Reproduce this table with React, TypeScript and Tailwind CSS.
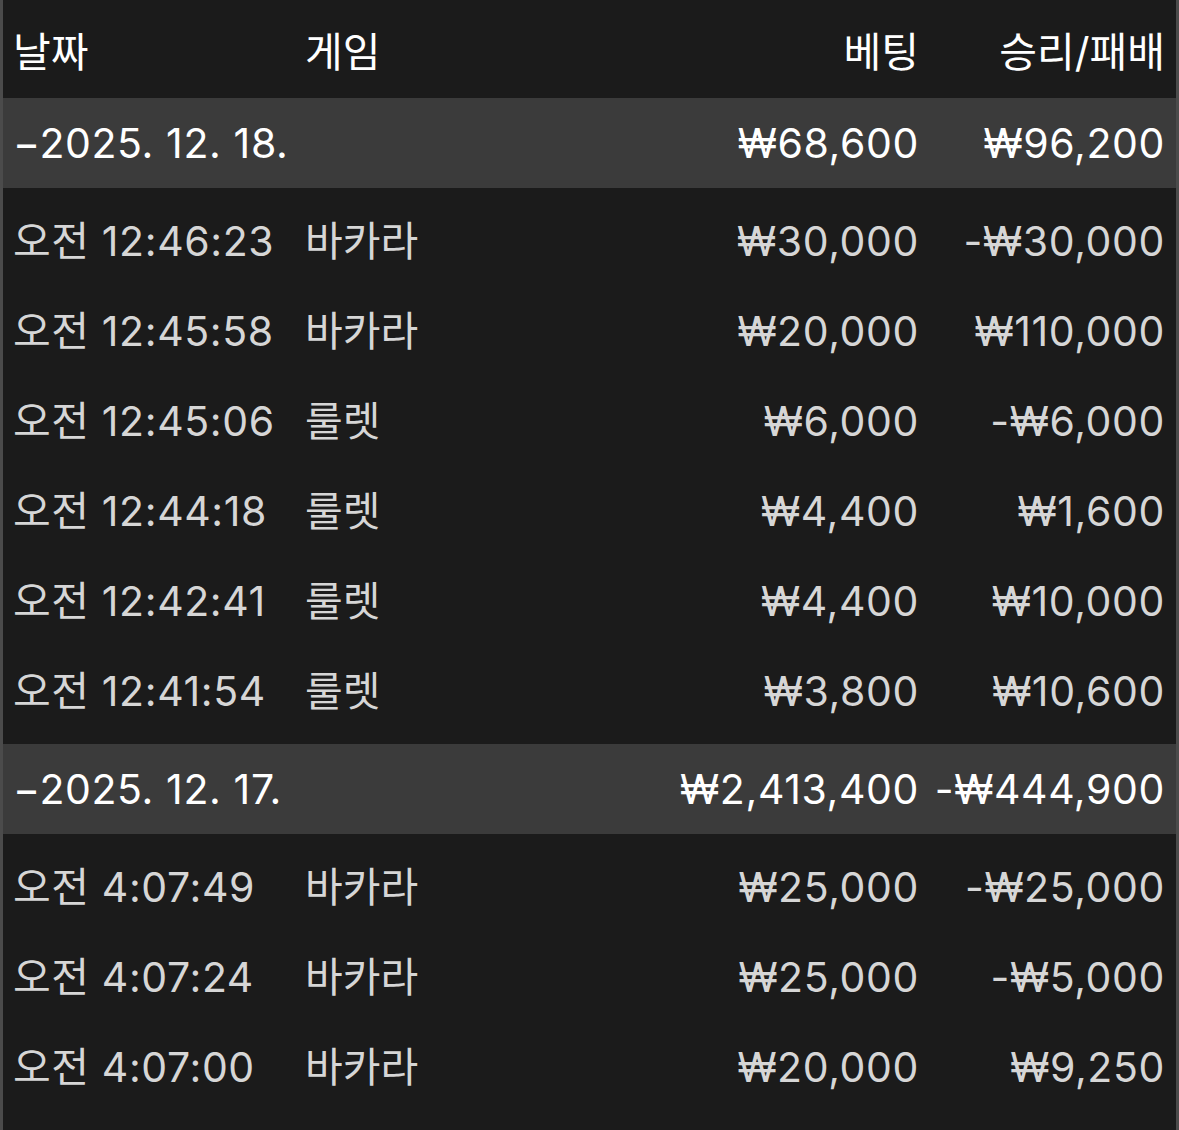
const groups = [
  {
    date: "2025. 12. 18.",
    bet: "₩68,600",
    result: "₩96,200",
    rows: [
      ["오전 12:46:23", "바카라", "₩30,000", "-₩30,000"],
      ["오전 12:45:58", "바카라", "₩20,000", "₩110,000"],
      ["오전 12:45:06", "룰렛", "₩6,000", "-₩6,000"],
      ["오전 12:44:18", "룰렛", "₩4,400", "₩1,600"],
      ["오전 12:42:41", "룰렛", "₩4,400", "₩10,000"],
      ["오전 12:41:54", "룰렛", "₩3,800", "₩10,600"],
    ],
  },
  {
    date: "2025. 12. 17.",
    bet: "₩2,413,400",
    result: "-₩444,900",
    rows: [
      ["오전 4:07:49", "바카라", "₩25,000", "-₩25,000"],
      ["오전 4:07:24", "바카라", "₩25,000", "-₩5,000"],
      ["오전 4:07:00", "바카라", "₩20,000", "₩9,250"],
    ],
  },
];

const font = { fontFamily: '"Inter", "Noto Sans CJK KR", sans-serif' };

export default function App() {
  return (
    <div
      className="min-h-[1130px] w-full bg-[#1b1b1b] border-x-[3px] border-[#4b4b4b] text-[41px] leading-none tracking-[0.015em]"
      style={font}
    >
      <div className="flex h-[98px] items-center pt-[6px] text-white tracking-normal">
        <div className="w-[302px] pl-[10px]">날짜</div>
        <div className="flex-1">게임</div>
        <div className="text-right">베팅</div>
        <div className="w-[257px] pr-[11px] text-right">승리/패배</div>
      </div>
      {groups.map((g) => (
        <div key={g.date}>
          <div className="flex h-[90px] items-center bg-[#3b3b3b] text-white">
            <div className="w-[302px] pl-[10px]">−{g.date}</div>
            <div className="flex-1" />
            <div className="text-right">{g.bet}</div>
            <div className="w-[257px] pr-[11px] text-right">{g.result}</div>
          </div>
          <div className="py-2 text-[#d6d6d6]">
            {g.rows.map((r) => (
              <div key={r[0]} className="flex h-[90px] items-center">
                <div className="w-[302px] pl-[10px]">{r[0]}</div>
                <div className="flex-1 tracking-normal">{r[1]}</div>
                <div className="text-right">{r[2]}</div>
                <div className="w-[257px] pr-[11px] text-right">{r[3]}</div>
              </div>
            ))}
          </div>
        </div>
      ))}
    </div>
  );
}
